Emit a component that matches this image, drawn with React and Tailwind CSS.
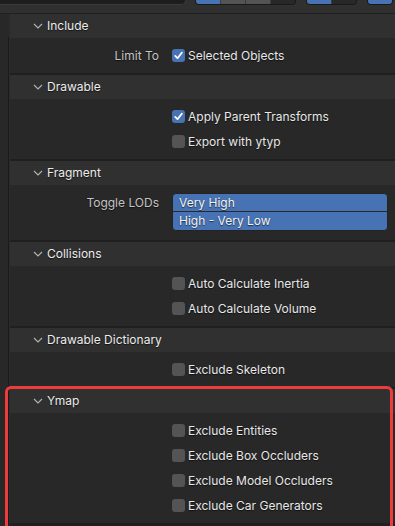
import React from "react";

const font = { fontFamily: "Inter, 'Noto Sans', sans-serif" };

function Chevron() {
  return (
    <svg width="10" height="6" viewBox="0 0 10 6" className="shrink-0">
      <path d="M1 1 L5 5 L9 1" fill="none" stroke="#b4b4b4" strokeWidth="1.1" />
    </svg>
  );
}

function Check({ checked }) {
  return (
    <div
      className={
        "w-[13px] h-[13px] rounded-[3px] flex items-center justify-center shrink-0 " +
        (checked ? "bg-[#4772b3]" : "bg-[#545454]")
      }
    >
      {checked && (
        <svg width="11" height="11" viewBox="0 0 11 11">
          <path d="M2.2 5.8 L4.5 8.2 L8.9 2.6" fill="none" stroke="#ffffff" strokeWidth="1.7" strokeLinecap="round" strokeLinejoin="round" />
        </svg>
      )}
    </div>
  );
}

function Header({ title }) {
  return (
    <div className="h-[24px] bg-[#303030] flex items-center pl-[23px] gap-[4px]">
      <Chevron />
      <span className="text-[12px] text-[#ececec] [text-shadow:0_1px_1px_rgba(0,0,0,0.6)]">{title}</span>
    </div>
  );
}

function Row({ label, text, checked }) {
  return (
    <div className="h-[25px] flex items-center">
      <div className="w-[151px] pr-[2px] text-right text-[12px] text-[#c4c4c4] [text-shadow:0_1px_1px_rgba(0,0,0,0.6)]">{label || ""}</div>
      <div className="ml-[11px] flex items-center gap-[3px]">
        <Check checked={checked} />
        <span className="text-[12px] text-[#e8e8e8] [text-shadow:0_1px_1px_rgba(0,0,0,0.6)]">{text}</span>
      </div>
    </div>
  );
}

function Panel({ title, children, bodyClass }) {
  return (
    <div className="flex flex-col">
      <Header title={title} />
      <div className={"bg-[#282828] " + (bodyClass || "py-[5px]")}>{children}</div>
    </div>
  );
}

export default function App() {
  return (
    <div className="w-[395px] h-[526px] bg-[#1f1f1f] overflow-hidden relative" style={font}>
      {/* top strip */}
      <div className="h-[14px] bg-[#303030] relative flex items-start border-b border-[#1f1f1f]">
        <div className="w-[186px] h-[5px] bg-[#1d1d1d] rounded-br-[5px] border-r border-b border-[#3a3a3a]" />
        <div className="ml-[9px] flex h-[5px] rounded-b-[4px] overflow-hidden border border-t-0 border-[#1a1a1a]">
          <div className="w-[24px] bg-[#4772b3]" />
          <div className="w-[1px] bg-[#3a3a3a]" />
          <div className="w-[24px] bg-[#545454]" />
          <div className="w-[1px] bg-[#3a3a3a]" />
          <div className="w-[24px] bg-[#545454]" />
          <div className="w-[1px] bg-[#3a3a3a]" />
          <div className="w-[24px] bg-[#282828]" />
        </div>
        <div className="ml-[10px] flex h-[5px] rounded-b-[4px] overflow-hidden border border-t-0 border-[#1a1a1a]">
          <div className="w-[24px] bg-[#4772b3]" />
          <div className="w-[1px] bg-[#3a3a3a]" />
          <div className="w-[24px] bg-[#282828]" />
        </div>
        <div className="ml-[10px] flex h-[5px] rounded-b-[4px] overflow-hidden border border-t-0 border-[#1a1a1a]">
          <div className="w-[24px] bg-[#4772b3]" />
        </div>
      </div>

      <div className="flex">
        {/* left strip */}
        <div className="w-[9px] flex flex-col bg-[#282828]">
          <div className="h-[23px]" />
          <div className="h-[600px] border-r border-[#1a1a1a]" />
        </div>
        <div className="w-[1px] bg-[#2b2b2b]" />
        <div className="flex-1 flex flex-col gap-[2px]">
          <Panel title="Include">
            <Row label="Limit To" text="Selected Objects" checked />
          </Panel>
          <Panel title="Drawable">
            <Row text="Apply Parent Transforms" checked />
            <Row text="Export with ytyp" />
          </Panel>
          <Panel title="Fragment" bodyClass="pt-[8px] pb-[9px]">
            <div className="flex items-start">
              <div className="w-[151px] pr-[2px] h-[19px] flex items-center justify-end text-[12px] text-[#c4c4c4] [text-shadow:0_1px_1px_rgba(0,0,0,0.6)]">Toggle LODs</div>
              <div className="ml-[11px] mr-[7px] flex-1 rounded-[4px] overflow-hidden border border-[#232323] flex flex-col bg-[#4772b3]">
                <div className="h-[18px] flex items-center px-[6px] text-[12px] text-[#f2f2f2] [text-shadow:0_1px_1px_rgba(0,0,0,0.6)] border-b border-[#2a2a2a]">Very High</div>
                <div className="h-[18px] flex items-center px-[6px] text-[12px] text-[#f2f2f2] [text-shadow:0_1px_1px_rgba(0,0,0,0.6)]">High - Very Low</div>
              </div>
            </div>
          </Panel>
          <Panel title="Collisions">
            <Row text="Auto Calculate Inertia" />
            <Row text="Auto Calculate Volume" />
          </Panel>
          <Panel title="Drawable Dictionary">
            <Row text="Exclude Skeleton" />
          </Panel>
          <Panel title="Ymap">
            <Row text="Exclude Entities" />
            <Row text="Exclude Box Occluders" />
            <Row text="Exclude Model Occluders" />
            <Row text="Exclude Car Generators" />
          </Panel>
        </div>
      </div>

      {/* annotation */}
      <div className="absolute left-[5px] top-[386px] w-[388px] h-[160px] border-[3px] border-[#ee3b3b] rounded-[6px] pointer-events-none" />
    </div>
  );
}
